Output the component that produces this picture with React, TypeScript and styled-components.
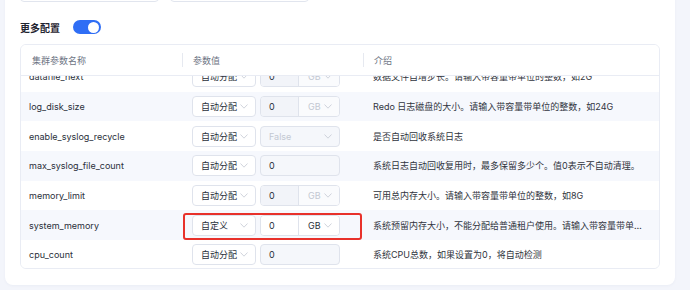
import React from 'react';
import styled, { createGlobalStyle } from 'styled-components';

type Mode = 'auto' | 'custom';
type Kind = 'size' | 'bool' | 'number';

interface Param {
  name: string;
  mode: Mode;
  kind: Kind;
  desc: string;
}

const params: Param[] = [
  { name: 'datafile_next', mode: 'auto', kind: 'size', desc: '数据文件自增步长。请输入带容量带单位的整数，如2G' },
  { name: 'log_disk_size', mode: 'auto', kind: 'size', desc: 'Redo 日志磁盘的大小。请输入带容量带单位的整数，如24G' },
  { name: 'enable_syslog_recycle', mode: 'auto', kind: 'bool', desc: '是否自动回收系统日志' },
  { name: 'max_syslog_file_count', mode: 'auto', kind: 'number', desc: '系统日志自动回收复用时，最多保留多少个。值0表示不自动清理。' },
  { name: 'memory_limit', mode: 'auto', kind: 'size', desc: '可用总内存大小。请输入带容量带单位的整数，如8G' },
  { name: 'system_memory', mode: 'custom', kind: 'size', desc: '系统预留内存大小，不能分配给普通租户使用。请输入带容量带单位的整数，如2G' },
  { name: 'cpu_count', mode: 'auto', kind: 'number', desc: '系统CPU总数，如果设置为0，将自动检测' },
];

const GlobalStyle = createGlobalStyle`
  html, body {
    margin: 0;
    padding: 0;
    background: #f3f5fb;
    font-family: "Inter", "Noto Sans CJK SC", sans-serif;
  }
  * { box-sizing: border-box; }
`;

const Chevron: React.FC = () => (
  <ChevronIcon viewBox="0 0 8 5" width="8" height="5">
    <polyline points="0.5,0.5 4,4.2 7.5,0.5" fill="none" stroke="currentColor" strokeWidth="0.8" />
  </ChevronIcon>
);

const ValueCell: React.FC<{ param: Param }> = ({ param }) => {
  const custom = param.mode === 'custom';
  return (
    <Controls>
      <Select $width={64}>
        <span>{custom ? '自定义' : '自动分配'}</span>
        <Chevron />
      </Select>
      {param.kind === 'size' && (
        <Group>
          <NumberPart $disabled={!custom}>0</NumberPart>
          <UnitPart $disabled={!custom}>
            <span>GB</span>
            <Chevron />
          </UnitPart>
        </Group>
      )}
      {param.kind === 'bool' && (
        <Select $width={80} $disabled>
          <span>False</span>
          <Chevron />
        </Select>
      )}
      {param.kind === 'number' && <NumberInput>0</NumberInput>}
      {custom && <Highlight />}
    </Controls>
  );
};

const App: React.FC = () => (
  <Page>
    <GlobalStyle />
    <Card>
      <FormRow>
        <FormInput />
        <FormInput />
      </FormRow>
      <SectionHeader>
        <SectionTitle>更多配置</SectionTitle>
        <Toggle>
          <Knob />
        </Toggle>
      </SectionHeader>
      <Table>
        <HeaderRow>
          <HeadCell>集群参数名称</HeadCell>
          <HeadCell $divider>参数值</HeadCell>
          <HeadCell $divider>介绍</HeadCell>
        </HeaderRow>
        <Body>
          <Rows>
            {params.map((p, i) => (
              <Row key={p.name} $striped={i % 2 === 1}>
                <NameCell>{p.name}</NameCell>
                <ValueCol>
                  <ValueCell param={p} />
                </ValueCol>
                <DescCell>{p.desc}</DescCell>
              </Row>
            ))}
          </Rows>
        </Body>
      </Table>
    </Card>
  </Page>
);

const Page = styled.div`
  height: 290px;
  overflow: hidden;
  padding: 0 15px 0 5px;
`;

const Card = styled.div`
  margin-top: -30px;
  background: #fff;
  border-radius: 8px;
  padding: 0 15px 16px;
  box-shadow: 0 1px 3px rgba(30, 50, 100, 0.04);
`;

const FormRow = styled.div`
  display: flex;
  gap: 11px;
`;

const FormInput = styled.div`
  width: 139px;
  height: 32px;
  border: 1px solid #e1e5ee;
  border-radius: 4px;
  background: #fff;
`;

const SectionHeader = styled.div`
  display: flex;
  align-items: center;
  gap: 13px;
  margin-top: 18px;
  height: 14px;
`;

const SectionTitle = styled.div`
  font-size: 10px;
  font-weight: 700;
  color: #1f2430;
`;

const Toggle = styled.div`
  width: 28px;
  height: 14px;
  border-radius: 7px;
  background: #2f6ef5;
  display: flex;
  justify-content: flex-end;
  align-items: center;
  padding: 0 2px;
`;

const Knob = styled.div`
  width: 11px;
  height: 11px;
  border-radius: 50%;
  background: #fff;
`;

const Table = styled.div`
  margin-top: 10px;
  border: 1px solid #e9ecf4;
  border-radius: 6px;
  height: 225px;
  overflow: hidden;
  display: flex;
  flex-direction: column;
`;

const HeaderRow = styled.div`
  display: grid;
  grid-template-columns: 161px 181px 1fr;
  height: 31px;
  flex-shrink: 0;
  align-items: center;
  background: #fff;
  border-bottom: 1px solid #e9ecf4;
  position: relative;
  z-index: 1;
`;

const HeadCell = styled.div<{ $divider?: boolean }>`
  position: relative;
  padding-left: 11px;
  font-size: 9px;
  color: #6d7483;
  height: 100%;
  display: flex;
  align-items: center;

  &::before {
    content: '';
    display: ${p => (p.$divider ? 'block' : 'none')};
    position: absolute;
    left: 0;
    top: 8px;
    bottom: 8px;
    width: 1px;
    background: #e6e9f0;
  }
`;

const Body = styled.div`
  flex: 1;
  overflow: hidden;
`;

const Rows = styled.div`
  margin-top: -14px;
`;

const Row = styled.div<{ $striped: boolean }>`
  display: grid;
  grid-template-columns: 161px 181px 1fr;
  height: 29.7px;
  align-items: center;
  background: ${p => (p.$striped ? '#f6f8fd' : '#fff')};
  font-size: 9px;
  color: #2a2f3a;
`;

const NameCell = styled.div`
  padding-left: 8px;
`;

const ValueCol = styled.div`
  padding-left: 10px;
`;

const DescCell = styled.div`
  padding: 0 15px 0 10px;
  white-space: nowrap;
  overflow: hidden;
  text-overflow: ellipsis;
  color: #30343d;
`;

const Controls = styled.div`
  position: relative;
  display: flex;
  gap: 4px;
`;

const Select = styled.div<{ $width: number; $disabled?: boolean }>`
  width: ${p => p.$width}px;
  height: 21px;
  border: 1px solid #dfe3ec;
  border-radius: 4px;
  background: ${p => (p.$disabled ? '#f5f7fb' : '#fff')};
  color: ${p => (p.$disabled ? '#c3c8d2' : '#2a2f3a')};
  display: flex;
  align-items: center;
  justify-content: space-between;
  padding: 0 7px 0 8px;
`;

const ChevronIcon = styled.svg`
  color: #c4c9d3;
  flex-shrink: 0;
`;

const Group = styled.div`
  width: 80px;
  height: 21px;
  border: 1px solid #dfe3ec;
  border-radius: 4px;
  display: flex;
  overflow: hidden;
`;

const NumberPart = styled.div<{ $disabled: boolean }>`
  width: 38px;
  display: flex;
  align-items: center;
  padding-left: 8px;
  background: ${p => (p.$disabled ? '#f2f4f9' : '#fff')};
  border-right: 1px solid #dfe3ec;
  color: #2a2f3a;
`;

const UnitPart = styled.div<{ $disabled: boolean }>`
  flex: 1;
  display: flex;
  align-items: center;
  justify-content: space-between;
  padding: 0 7px 0 9px;
  background: ${p => (p.$disabled ? '#fafbfd' : '#fff')};
  color: ${p => (p.$disabled ? '#c3c8d2' : '#2a2f3a')};
`;

const NumberInput = styled.div`
  width: 80px;
  height: 21px;
  border: 1px solid #dfe3ec;
  border-radius: 4px;
  background: #f5f7fb;
  display: flex;
  align-items: center;
  padding-left: 8px;
  color: #2a2f3a;
`;

const Highlight = styled.div`
  position: absolute;
  left: -9px;
  top: -2px;
  width: 179px;
  height: 27px;
  border: 2px solid #e8312b;
  border-radius: 3px;
  pointer-events: none;
`;

export default App;
